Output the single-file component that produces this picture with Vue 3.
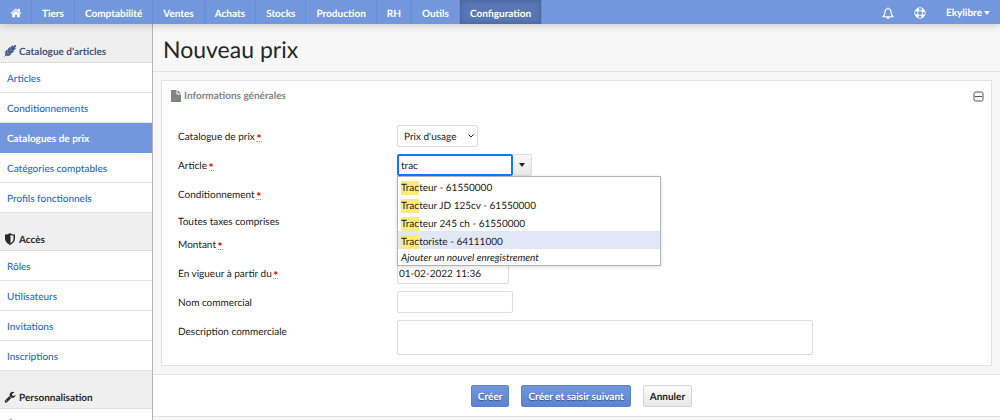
<script setup>
import { ref } from 'vue'

const nav = ['Tiers', 'Comptabilité', 'Ventes', 'Achats', 'Stocks', 'Production', 'RH', 'Outils', 'Configuration']
const activeNav = 'Configuration'

const groups = [
  { icon: 'wheat', title: "Catalogue d'articles", tone: 'accent', items: ['Articles', 'Conditionnements', 'Catalogues de prix', 'Catégories comptables', 'Profils fonctionnels'] },
  { icon: 'shield', title: 'Accès', items: ['Rôles', 'Utilisateurs', 'Invitations', 'Inscriptions'] },
  { icon: 'wrench', title: 'Personnalisation', items: ['Étiquettes'] },
]
const activeItem = 'Catalogues de prix'

const article = ref('trac')
const startedAt = ref('01-02-2022 11:36')
const suggestions = ['teur - 61550000', 'teur JD 125cv - 61550000', 'teur 245 ch - 61550000', 'toriste - 64111000']
const highlighted = 3
</script>

<template>
  <div class="app">
    <header class="topbar">
      <nav class="menu">
        <a href="#" class="menu-item home" aria-label="Accueil">
          <svg viewBox="0 0 1792 1792"><path d="M1472 992v480q0 26-19 45t-45 19h-384v-384h-256v384h-384q-26 0-45-19t-19-45v-480q0-1 .5-3t.5-3l575-474 575 474q1 2 1 6zm223-69l-62 74q-8 9-21 11h-3q-13 0-21-7l-692-577-692 577q-12 8-24 7-13-2-21-11l-62-74q-8-10-7-23.5t11-21.5l719-599q32-26 76-26t76 26l244 204v-195q0-14 9-23t23-9h192q14 0 23 9t9 23v408l219 182q10 8 11 21.5t-7 23.5z" /></svg>
        </a>
        <a v-for="n in nav" :key="n" href="#" class="menu-item" :class="{ active: n === activeNav }">{{ n }}</a>
      </nav>
      <div class="tools">
        <button type="button" class="tool" aria-label="Notifications">
          <svg viewBox="0 0 24 24" fill="none" stroke="currentColor" stroke-width="2.200" stroke-linejoin="round" stroke-linecap="round">
            <path d="M12 1.5v2M2 19.500c3-2.500 4-5.500 4-9.500 0-4 2.500-6.500 6-6.500s6 2.500 6 6.500c0 4 1 7 4 9.500zM9 20c0 3 6 3 6 0" />
          </svg>
        </button>
        <button type="button" class="tool" aria-label="Aide">
          <svg viewBox="0 0 24 24" fill="none" stroke="currentColor">
            <circle cx="12" cy="12" r="10.500" stroke-width="1.800" />
            <circle cx="12" cy="12" r="5" stroke-width="1.800" />
            <circle cx="12" cy="12" r="7.800" stroke-width="5" stroke-dasharray="6.250 6" stroke-dashoffset="-3" />
          </svg>
        </button>
        <button type="button" class="user">Ekylibre<span class="caret"></span></button>
      </div>
    </header>

    <div class="body">
      <aside class="sidebar">
        <section v-for="g in groups" :key="g.title">
          <h2 class="group-title" :class="g.tone">
            <svg v-if="g.icon === 'wheat'" class="wheat" viewBox="0 0 24 24">
              <path d="M1 23L20 4" stroke="currentColor" stroke-width="2" />
              <path d="M3 19c-1-4 0-7 3-9 2 3 1 6-3 9zM8 14c-1-4 0-7 3-9 2 3 1 6-3 9zM13 9c-1-4 1-6 4-8 1 3 0 6-4 8zM5 21c4 1 7 0 9-3-3-2-6-1-9 3zM10 16c4 1 7 0 9-3-3-2-6-1-9 3zM15 11c4 1 6-1 8-4-3-1-6 0-8 4zM17 7c0-3 3-6 7-7 0 4-3 7-7 7z" stroke="currentColor" stroke-width="1" />
            </svg>
            <svg v-else-if="g.icon === 'shield'" class="shield" viewBox="0 0 24 24">
              <path fill-rule="evenodd" d="M12 0c3 2 6 3 10 3v8c0 6-4 10-10 13C6 21 2 17 2 11V3c4 0 7-1 10-3zm1 3.500v17c4-2.500 6-5.500 6-9.500V5.500c-2 0-4-.8-6-2z" />
            </svg>
            <svg v-else class="wrench" viewBox="0 0 1792 1792">
              <path d="M448 1472q0-26-19-45t-45-19-45 19-19 45 19 45 45 19 45-19 19-45zm644-420l-682 682q-37 37-90 37-52 0-91-37l-106-108q-38-36-38-90 0-53 38-91l681-681q39 98 114.500 173.500t173.500 114.500zm634-435q0 39-23 106-47 134-164.500 217.500t-258.500 83.500q-185 0-316.500-131.500t-131.500-316.500 131.500-316.500 316.500-131.500q58 0 121.500 16.500t107.500 46.500q16 11 16 28t-16 28l-293 169v224l193 107q5-3 79-48.500t135.500-81 70.500-35.500q15 0 23.500 10t8.500 25z" />
            </svg>
            {{ g.title }}
          </h2>
          <ul class="links">
            <li v-for="i in g.items" :key="i"><a href="#" :class="{ active: i === activeItem }">{{ i }}</a></li>
          </ul>
        </section>
      </aside>

      <main class="content">
        <h1 class="title">Nouveau prix</h1>
        <form class="form" @submit.prevent>
          <section class="panel">
            <div class="panel-head">
              <h2>
                <svg viewBox="0 0 24 24"><path d="M2 0h11v9h9v15H2zM15 0l7 7h-7z" /></svg>
                Informations générales
              </h2>
              <button type="button" class="collapse" aria-label="Réduire">
                <svg viewBox="0 0 11 11" fill="none" stroke="currentColor"><rect x="1" y="1" width="9" height="9" rx="1.500" /><path d="M2 5.500h7" /></svg>
              </button>
            </div>
            <div class="fields">
              <div class="row">
                <label for="catalog">Catalogue de prix <abbr title="Obligatoire">*</abbr></label>
                <span class="select">
                  <select id="catalog"><option>Prix d'usage</option></select>
                  <svg viewBox="0 0 6 4" fill="none" stroke="currentColor"><path d="M.5 .5L3 3L5.500 .5" /></svg>
                </span>
              </div>
              <div class="row">
                <label for="article">Article <abbr title="Obligatoire">*</abbr></label>
                <div class="combo">
                  <input id="article" v-model="article" type="text" class="medium focused" autocomplete="off" />
                  <button type="button" class="toggle" aria-label="Afficher la liste"><span class="caret"></span></button>
                  <ul class="suggestions">
                    <li v-for="(s, k) in suggestions" :key="s" :class="{ selected: k === highlighted }"><mark>Trac</mark>{{ s }}</li>
                    <li class="add">Ajouter un nouvel enregistrement</li>
                  </ul>
                </div>
              </div>
              <div class="row">
                <label for="unit">Conditionnement <abbr title="Obligatoire">*</abbr></label>
                <input id="unit" type="text" class="medium" />
              </div>
              <div class="row short">
                <label for="taxes">Toutes taxes comprises</label>
                <input id="taxes" type="checkbox" />
              </div>
              <div class="row">
                <label for="amount">Montant <abbr title="Obligatoire">*</abbr></label>
                <input id="amount" type="text" class="medium" />
              </div>
              <div class="row">
                <label for="started">En vigueur à partir du <abbr title="Obligatoire">*</abbr></label>
                <input id="started" v-model="startedAt" type="text" class="date" />
              </div>
              <div class="row">
                <label for="name">Nom commercial</label>
                <input id="name" type="text" class="medium" />
              </div>
              <div class="row">
                <label for="description">Description commerciale</label>
                <textarea id="description"></textarea>
              </div>
            </div>
          </section>
          <div class="actions">
            <button type="submit" class="btn primary">Créer</button>
            <button type="submit" class="btn primary">Créer et saisir suivant</button>
            <button type="button" class="btn">Annuler</button>
          </div>
        </form>
      </main>
    </div>
  </div>
</template>

<style>
html, body { margin: 0; background: #f7f7f7; }
</style>

<style scoped>
* { box-sizing: border-box; }
.app {
  display: flex;
  flex-direction: column;
  height: 100vh;
  overflow: hidden;
  font: 10px/16px Lato, "Liberation Sans", sans-serif;
  text-rendering: geometricPrecision;
  color: #222;
}
button, input, select, textarea { font: inherit; color: inherit; margin: 0; text-rendering: inherit; }
a { text-decoration: none; }
h1, h2, ul { margin: 0; padding: 0; list-style: none; }
svg { fill: currentColor; display: block; }
svg[fill="none"] { fill: none; }

.topbar {
  display: flex;
  flex: none;
  justify-content: space-between;
  height: 24px;
  background: #7297dd;
  color: #fff;
  font-weight: 700;
  box-shadow: 0 1px 8px rgba(0, 0, 0, .2);
  position: relative;
  z-index: 2;
}
.menu { display: flex; }
.menu-item {
  display: flex;
  align-items: center;
  padding: 3px 10px 0;
  color: #fff;
  border-right: 1px solid #688dd4;
}
.menu-item.home { padding: 1px 9px 0 10px; }
.menu-item.active { background: #5877b4; box-shadow: inset 0 0 5px rgba(30, 50, 100, .4); }
.home svg { width: 12px; height: 12px; }
.tools { display: flex; align-items: center; padding-top: 2px; }
.tool, .user, .collapse { border: 0; background: none; padding: 0; }
.tool { width: 12px; margin-right: 20px; }
.tool svg { width: 12px; height: 12px; }
.user { display: flex; align-items: center; gap: 2px; margin-right: 10px; font-weight: 700; }
.caret { border: 3px solid transparent; border-top: 4px solid currentColor; border-bottom: 0; }

.body { display: flex; flex: 1; min-height: 0; }
.sidebar { flex: none; width: 153px; padding-top: 1px; background: #efefef; border-right: 1px solid #b4b4b4; overflow: hidden; }
.group-title {
  display: flex;
  align-items: flex-end;
  gap: 3px;
  height: 38px;
  padding: 0 4px 2px;
  background: #efefef;
  border-bottom: 1px solid #ddd;
  font-size: 10px;
  line-height: 16px;
  color: #2a2a2a;
}
.group-title.accent { color: #3f5382; }
.group-title svg { width: 12px; height: 12px; margin-bottom: 3px; }
.links a {
  display: block;
  height: 30px;
  padding: 8px 7px 0;
  background: #fff;
  border-bottom: 1px solid #e2e2e2;
  color: #2f6ad2;
  font-weight: 500;
}
.links a.active { background: #7297dd; border-color: #7297dd; color: #fff; font-weight: 700; }

.content { flex: 1; min-width: 0; background: #f7f7f7; }
.title {
  padding: 9px 10px 6px;
  border-bottom: 1px solid #e2e2e2;
  font-size: 23px;
  line-height: 32px;
  font-weight: 400;
  color: #262626;
}
.panel {
  margin: 8px;
  padding: 0 7px 10px 8px;
  background: #fff;
  border: 1px solid #e2e2e2;
}
.panel-head { display: flex; align-items: center; justify-content: space-between; height: 30px; color: #858585; }
.panel-head h2 { display: flex; align-items: center; gap: 2px; font-size: 10px; }
.panel-head h2 svg { width: 12px; height: 12px; }
.collapse svg { width: 11px; height: 11px; }
.collapse { color: #555; }
.fields { display: flex; flex-direction: column; gap: 7px; padding: 14px 8px 0; }
.row { display: grid; grid-template-columns: 219px 1fr; justify-items: start; align-items: start; height: 22px; }
.row:last-child { height: auto; }
.row > label { line-height: 24px; }
.row.short { height: 14px; }
.row.short label { line-height: 20px; }
abbr {
  display: inline-block;
  height: 9px;
  margin-left: -1px;
  padding-top: 1px;
  border-bottom: 1px dotted #e88;
  color: #e00;
  font-size: 12px;
  font-weight: 700;
  line-height: 10px;
  text-decoration: none;
  vertical-align: -3px;
}
input[type="text"], select, textarea {
  height: 22px;
  padding: 1px 4px 0;
  border: 1px solid #ddd;
  border-radius: 2px;
  background: #fff;
  outline: 0;
}
input[type="checkbox"] { width: 12px; height: 12px; }
.select { position: relative; }
.select select { appearance: none; width: 81px; padding: 2px 6px 0; }
.select svg { position: absolute; right: 4px; top: 9px; width: 6px; height: 4px; }
input.medium { width: 116px; }
input[type="text"].date { width: 112px; padding: 2px 1px 0; }
textarea { display: block; width: 416px; max-width: 100%; height: 35px; resize: none; }
.combo { position: relative; display: flex; }
input[type="text"].focused { border: 2px solid #0a7cff; padding: 2px 2px 0; }
.toggle {
  width: 19px;
  height: 22px;
  padding: 0;
  display: grid;
  place-items: center;
  border: 1px solid #ddd;
  border-left: 0;
  background: linear-gradient(#f8f8f8, #e8e8e8);
  border-radius: 0 2px 2px 0;
}
.suggestions {
  position: absolute;
  top: 100%;
  left: 0;
  z-index: 3;
  width: 264px;
  background: #fff;
  border: 1px solid #b4b4b4;
  box-shadow: 0 1px 4px rgba(0, 0, 0, .15);
}
.suggestions li { height: 18px; padding: 3px 3px 0; white-space: nowrap; }
.suggestions .selected { background: #e0e7f6; }
.suggestions .add { height: 16px; padding-top: 1px; font-style: italic; }
mark { background: #fdea7c; color: inherit; padding: 1px 0; }

.actions {
  display: flex;
  justify-content: center;
  gap: 12px;
  padding: 10px 0 9px 10px;
  background: #fff;
  border: solid #e2e2e2;
  border-width: 1px 0;
}
.btn {
  height: 22px;
  padding: 1px 6px 0;
  border: 1px solid #d4d4d4;
  border-radius: 2px;
  background: linear-gradient(#fafafa, #e9e9e9);
  font-weight: 700;
}
.btn.primary {
  border-color: #5c82cf;
  background: linear-gradient(#7297dd, #5b82d2);
  color: #fff;
  text-shadow: 0 1px 1px rgba(0, 0, 0, .4);
}
</style>
